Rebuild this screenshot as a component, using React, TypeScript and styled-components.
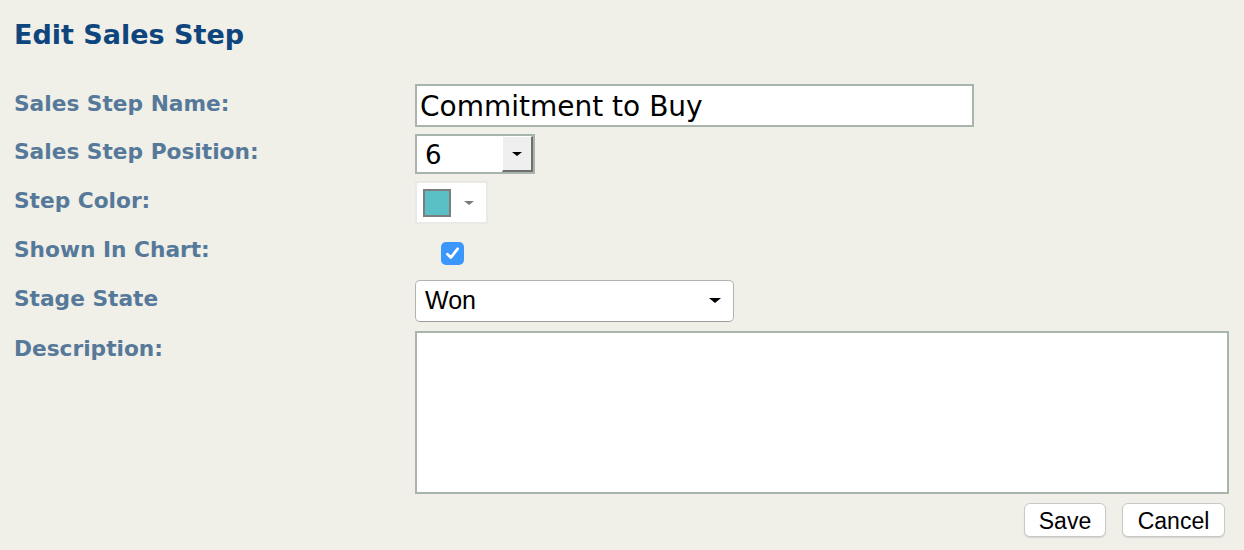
import React from "react";
import styled, { createGlobalStyle } from "styled-components";

const GlobalStyle = createGlobalStyle`
  html, body {
    margin: 0;
    padding: 0;
    background: #f0efe8;
  }
  body {
    font-family: "DejaVu Sans", Verdana, sans-serif;
  }
`;

const Page = styled.div`
  width: 1244px;
  height: 550px;
  box-sizing: border-box;
  padding: 20px 15px 0 14px;
  background: #f0efe8;
  overflow: hidden;
`;

const Title = styled.h1`
  margin: 0 0 34px;
  font-size: 27px;
  font-weight: bold;
  color: #0f457d;
  line-height: 30px;
`;

const Form = styled.div`
  display: grid;
  grid-template-columns: 401px 814px;
  row-gap: 7px;
`;

const Label = styled.label<{ $top?: boolean }>`
  font-size: 21.7px;
  font-weight: bold;
  color: #56799a;
  white-space: nowrap;
  align-self: ${(p) => (p.$top ? "start" : "center")};
  padding-bottom: ${(p) => (p.$top ? "0" : "5px")};
  padding-top: ${(p) => (p.$top ? "5px" : "0")};
  margin-top: ${(p) => (p.$top ? "2px" : "0")};
`;

const Field = styled.div<{ $height?: number }>`
  display: flex;
  align-items: center;
  min-height: ${(p) => p.$height ?? 0}px;
`;

const TextInput = styled.input`
  width: 559px;
  height: 43px;
  box-sizing: border-box;
  border: 2px solid #a7b5ac;
  background: #fff;
  padding: 2px 3px 0;
  font-family: "DejaVu Sans", Verdana, sans-serif;
  font-size: 28px;
  color: #000;
  outline: none;
`;

const BevelSelect = styled.div`
  width: 120px;
  height: 40px;
  box-sizing: border-box;
  border: 2px solid #a7b5ac;
  background: #fff;
  display: flex;
  align-items: stretch;
`;

const BevelValue = styled.span`
  flex: 1;
  display: flex;
  align-items: center;
  padding-left: 8px;
  padding-top: 2px;
  font-size: 26px;
  color: #000;
`;

const BevelButton = styled.span`
  width: 31px;
  display: flex;
  align-items: center;
  justify-content: center;
  background: #efefef;
  border-top: 1px solid #fff;
  border-left: 1px solid #fff;
  border-right: 2px solid #6f6f6f;
  border-bottom: 2px solid #6f6f6f;
  box-sizing: border-box;
`;

const Triangle = styled.span<{ $size: number; $color?: string }>`
  width: 0;
  height: 0;
  border-left: ${(p) => p.$size}px solid transparent;
  border-right: ${(p) => p.$size}px solid transparent;
  border-top: ${(p) => Math.round(p.$size * 0.8)}px solid ${(p) => p.$color ?? "#000"};
`;

const ColorPicker = styled.div`
  width: 73px;
  height: 43px;
  box-sizing: border-box;
  border: 2px solid #e9e9e6;
  background: #fff;
  display: flex;
  align-items: center;
  padding-left: 6px;
  gap: 13px;
`;

const Swatch = styled.span<{ $color: string }>`
  width: 28px;
  height: 28px;
  box-sizing: border-box;
  border: 2px solid #7d7d7d;
  background: ${(p) => p.$color};
`;

const CheckBox = styled.span`
  margin-left: 26px;
  margin-top: 3px;
  width: 23px;
  height: 23px;
  border-radius: 5px;
  background: #3b97fb;
  display: flex;
  align-items: center;
  justify-content: center;
`;

const RoundSelect = styled.div`
  width: 319px;
  height: 42px;
  box-sizing: border-box;
  border: 1px solid #b3b3b3;
  border-bottom-color: #9d9d9d;
  border-radius: 5px;
  background: #fff;
  display: flex;
  align-items: center;
  justify-content: space-between;
  padding: 0 12px 2px 9px;
  font-family: "Liberation Sans", Arial, sans-serif;
  font-size: 25px;
  color: #000;
`;

const TextArea = styled.textarea`
  margin-top: 2px;
  width: 814px;
  height: 163px;
  box-sizing: border-box;
  border: 2px solid #a7b5ac;
  background: #fff;
  resize: none;
  outline: none;
`;

const Actions = styled.div`
  grid-column: 2;
  display: flex;
  justify-content: flex-end;
  gap: 16px;
  padding-right: 4px;
  margin-top: 2px;
`;

const Button = styled.button<{ $width: number }>`
  width: ${(p) => p.$width}px;
  height: 34px;
  border: 1px solid #c9c9c9;
  border-radius: 6px;
  background: #fff;
  box-shadow: 0 1px 1px rgba(0, 0, 0, 0.12);
  font-family: "Liberation Sans", Arial, sans-serif;
  font-size: 23px;
  color: #000;
  padding: 2px 0 0;
`;

export default function App() {
  return (
    <Page>
      <GlobalStyle />
      <Title>Edit Sales Step</Title>
      <Form>
        <Label>Sales Step Name:</Label>
        <Field>
          <TextInput defaultValue="Commitment to Buy" />
        </Field>

        <Label>Sales Step Position:</Label>
        <Field>
          <BevelSelect>
            <BevelValue>6</BevelValue>
            <BevelButton>
              <Triangle $size={5} />
            </BevelButton>
          </BevelSelect>
        </Field>

        <Label>Step Color:</Label>
        <Field>
          <ColorPicker>
            <Swatch $color="#5bbfc6" />
            <Triangle $size={5} $color="#7a7a7a" />
          </ColorPicker>
        </Field>

        <Label>Shown In Chart:</Label>
        <Field $height={42}>
          <CheckBox>
            <svg width="17" height="17" viewBox="0 0 16 16">
              <path
                d="M3.2 8.6 L6.4 11.8 L12.8 3.6"
                fill="none"
                stroke="#fff"
                strokeWidth="2.6"
                strokeLinecap="round"
                strokeLinejoin="round"
              />
            </svg>
          </CheckBox>
        </Field>

        <Label>Stage State</Label>
        <Field>
          <RoundSelect>
            <span>Won</span>
            <Triangle $size={6} />
          </RoundSelect>
        </Field>

        <Label $top>Description:</Label>
        <Field>
          <TextArea />
        </Field>

        <Actions>
          <Button $width={82}>Save</Button>
          <Button $width={103}>Cancel</Button>
        </Actions>
      </Form>
    </Page>
  );
}
